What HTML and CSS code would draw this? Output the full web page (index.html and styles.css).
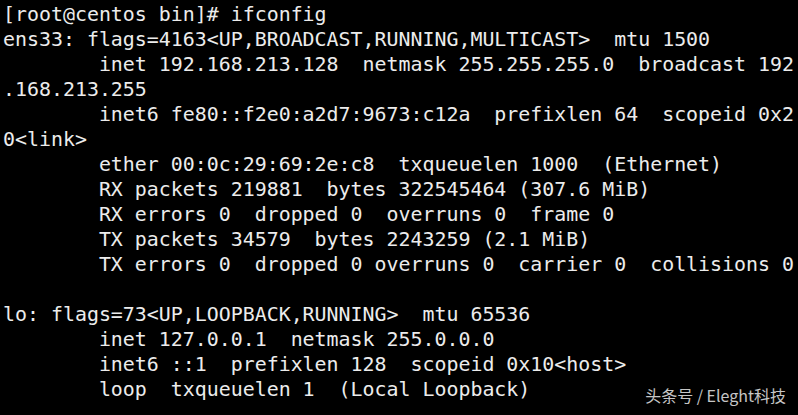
FILE: index.html
```html
<!DOCTYPE html>
<html>
<head>
<meta charset="utf-8">
<link rel="stylesheet" href="styles.css">
</head>
<body>
<div class="term">
<pre class="out">[root@centos bin]# ifconfig
ens33: flags=4163&lt;UP,BROADCAST,RUNNING,MULTICAST&gt;  mtu 1500
        inet 192.168.213.128  netmask 255.255.255.0  broadcast 192
.168.213.255
        inet6 fe80::f2e0:a2d7:9673:c12a  prefixlen 64  scopeid 0x2
0&lt;link&gt;
        ether 00:0c:29:69:2e:c8  txqueuelen 1000  (Ethernet)
        RX packets 219881  bytes 322545464 (307.6 MiB)
        RX errors 0  dropped 0  overruns 0  frame 0
        TX packets 34579  bytes 2243259 (2.1 MiB)
        TX errors 0  dropped 0 overruns 0  carrier 0  collisions 0

lo: flags=73&lt;UP,LOOPBACK,RUNNING&gt;  mtu 65536
        inet 127.0.0.1  netmask 255.0.0.0
        inet6 ::1  prefixlen 128  scopeid 0x10&lt;host&gt;
        loop  txqueuelen 1  (Local Loopback)</pre>
<div class="mark">头条号 / Eleght科技</div>
</div>
</body>
</html>
```
FILE: styles.css
```css
html, body {
  margin: 0;
  padding: 0;
  background: #000;
}
.term {
  position: relative;
  width: 798px;
  height: 415px;
  background: #000;
  overflow: hidden;
}
.out {
  margin: 0;
  padding: 2px 0 0 3px;
  font-family: "DejaVu Sans Mono", monospace;
  font-size: 19.92px;
  line-height: 25px;
  color: #ececec;
  white-space: pre;
}
.mark {
  position: absolute;
  right: 12px;
  bottom: 10px;
  font-family: "Noto Sans CJK SC", sans-serif;
  font-size: 16px;
  line-height: 20px;
  color: rgba(235, 235, 235, 0.85);
}
```
